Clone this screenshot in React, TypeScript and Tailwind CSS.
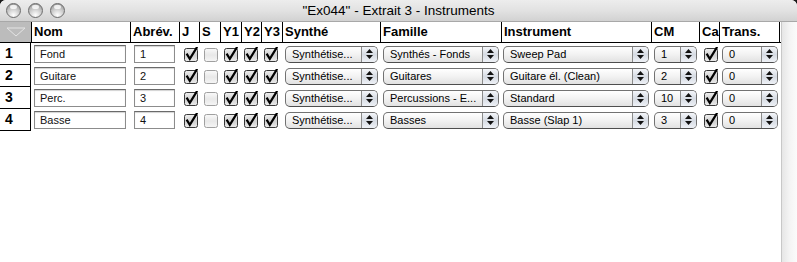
import React from "react";

const gridCols =
  "grid grid-cols-[31px_99px_49px_20px_21px_21px_20px_21px_98px_121px_150px_48px_20px_61px]";

function Check({ on = true }: { on?: boolean }) {
  return (
    <svg width="15" height="15" viewBox="0 0 15 15" className="block">
      <defs>
        <linearGradient id={on ? "cbg" : "cbg2"} x1="0" y1="0" x2="0" y2="1">
          <stop offset="0" stopColor={on ? "#f0f0f0" : "#fafafa"} />
          <stop offset="0.5" stopColor={on ? "#cfcfcf" : "#e8e8e8"} />
          <stop offset="1" stopColor={on ? "#ececec" : "#f6f6f6"} />
        </linearGradient>
      </defs>
      <rect
        x="0.5"
        y="1.5"
        width="13"
        height="13"
        rx="2"
        fill={`url(#${on ? "cbg" : "cbg2"})`}
        stroke={on ? "#383838" : "#a0a0a0"}
      />
      {on && (
        <path
          d="M3.2 7.6 L5.8 11.8 L12.6 0.8"
          fill="none"
          stroke="#000"
          strokeWidth="2.2"
          strokeLinecap="square"
        />
      )}
    </svg>
  );
}

function Popup({ w, text }: { w: number; text: string }) {
  return (
    <div
      className="flex h-[17px] rounded-[5px] border border-[#727272] border-b-[#4e4e4e] bg-gradient-to-b from-[#ffffff] via-[#f2f2f2] to-[#e2e2e2] overflow-hidden"
      style={{ width: w }}
    >
      <div className="flex-1 pl-[6px] text-[11px] leading-[15px] text-black whitespace-nowrap overflow-hidden font-['Liberation_Sans',Arial,sans-serif]">
        {text}
      </div>
      <div className="w-[16px] border-l border-[#8a8a8a] bg-gradient-to-b from-[#f4f6fa] via-[#d6dbe3] to-[#eef1f6] flex flex-col items-center justify-center gap-[2px]">
        <svg width="7" height="4" viewBox="0 0 7 4">
          <path d="M3.5 0 L7 4 L0 4 Z" fill="#111" />
        </svg>
        <svg width="7" height="4" viewBox="0 0 7 4">
          <path d="M0 0 L7 0 L3.5 4 Z" fill="#111" />
        </svg>
      </div>
    </div>
  );
}

function Field({ w, text }: { w: number; text: string }) {
  return (
    <div
      className="h-[18px] border border-[#8c8c8c] border-t-[#6a6a6a] bg-white shadow-[inset_0_1px_1px_rgba(0,0,0,0.18)] pl-[5px] text-[11px] leading-[16px] text-[#111] font-['Liberation_Sans',Arial,sans-serif]"
      style={{ width: w }}
    >
      {text}
    </div>
  );
}

const rows = [
  { n: "1", nom: "Fond", ab: "1", fam: "Synthés - Fonds", ins: "Sweep Pad", cm: "1" },
  { n: "2", nom: "Guitare", ab: "2", fam: "Guitares", ins: "Guitare él. (Clean)", cm: "2" },
  { n: "3", nom: "Perc.", ab: "3", fam: "Percussions - E...", ins: "Standard", cm: "10" },
  { n: "4", nom: "Basse", ab: "4", fam: "Basses", ins: "Basse (Slap 1)", cm: "3" },
];

const headers = ["Nom", "Abrév.", "J", "S", "Y1", "Y2", "Y3", "Synthé", "Famille", "Instrument", "CM", "Ca", "Trans."];

export default function App() {
  return (
    <div className="w-[797px] h-[262px] bg-[#1a1a1a] overflow-hidden font-['Liberation_Sans',Arial,sans-serif]">
      <div className="w-[797px] h-[262px] bg-white rounded-t-[6px] overflow-hidden flex flex-col">
        {/* Title bar */}
        <div className="relative h-[22px] shrink-0 bg-gradient-to-b from-[#ededed] via-[#e2e2e2] to-[#d2d2d2] border-b border-[#a8a8a8] flex items-center">
          <div className="absolute left-[6px] top-[3px] flex gap-[7px]">
            {[0, 1, 2].map((i) => (
              <div
                key={i}
                className="w-[15px] h-[15px] rounded-full border border-[#6c6c6c] bg-[radial-gradient(circle_at_50%_85%,#ffffff_0%,#d0d0d0_45%,#8a8a8a_100%)] relative"
              >
                <div className="absolute left-[3px] top-[1px] w-[7px] h-[4px] rounded-full bg-white/80" />
              </div>
            ))}
          </div>
          <div className="w-full text-center text-[13.5px] text-black leading-[22px] font-['Liberation_Sans',Arial,sans-serif]">
            "Ex044" - Extrait 3 - Instruments
          </div>
        </div>

        <div className="flex flex-1">
          <div className="w-[781px] flex flex-col">
            {/* Header */}
            <div className={`${gridCols} h-[21px] border-b border-black w-[781px]`}>
              <div className="bg-[#bcbcbc] flex items-center justify-center">
                <svg width="20" height="10" viewBox="0 0 20 10">
                  <path d="M1 1 L19 1 L10 9 Z" fill="none" stroke="#e4e4e4" strokeWidth="1" />
                </svg>
              </div>
              {headers.map((h, i) => (
                <div
                  key={h}
                  className={`border-l border-black pl-[2px] text-[13px] font-bold leading-[20px] text-black whitespace-nowrap overflow-hidden ${
                    i === headers.length - 1 ? "border-r" : ""
                  }`}
                >
                  {h}
                </div>
              ))}
            </div>
            {/* Rows */}
            {rows.map((r) => (
              <div key={r.n} className={`${gridCols} h-[22px] items-center`}>
                <div className="h-[22px] border-r border-b border-black pl-[5px] text-[14px] font-bold leading-[21px] text-black">
                  {r.n}
                </div>
                <div className="pl-[3px]">
                  <Field w={92} text={r.nom} />
                </div>
                <div className="pl-[4px]">
                  <Field w={41} text={r.ab} />
                </div>
                <div className="pl-[5px]">
                  <Check />
                </div>
                <div className="pl-[5px]">
                  <Check on={false} />
                </div>
                <div className="pl-[4px]">
                  <Check />
                </div>
                <div className="pl-[3px]">
                  <Check />
                </div>
                <div className="pl-[3px]">
                  <Check />
                </div>
                <div className="pl-[3px]">
                  <Popup w={93} text="Synthétise..." />
                </div>
                <div className="pl-[3px]">
                  <Popup w={116} text={r.fam} />
                </div>
                <div className="pl-[2px]">
                  <Popup w={146} text={r.ins} />
                </div>
                <div className="pl-[3px]">
                  <Popup w={43} text={r.cm} />
                </div>
                <div className="pl-[5px]">
                  <Check />
                </div>
                <div className="pl-[3px]">
                  <Popup w={56} text="0" />
                </div>
              </div>
            ))}
          </div>
          <div className="w-[16px] border-l border-[#c8c8c8] bg-gradient-to-r from-[#e6e6e6] via-[#f4f4f4] to-[#fbfbfb]" />
        </div>
      </div>
    </div>
  );
}
